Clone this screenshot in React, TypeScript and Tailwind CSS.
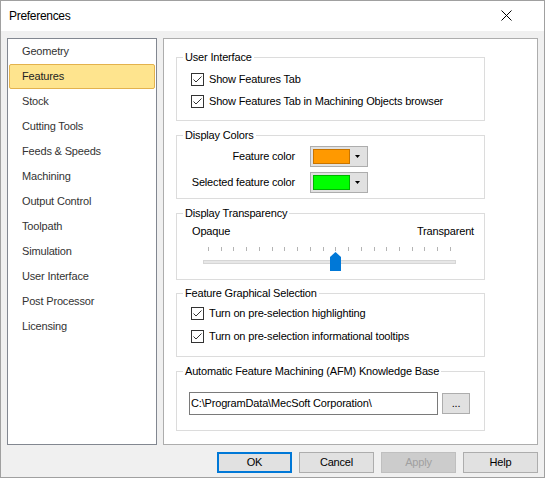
import React from 'react';

const FONT = "font-['Liberation_Sans',Arial,sans-serif]";

const NAV = [
  'Geometry',
  'Features',
  'Stock',
  'Cutting Tools',
  'Feeds & Speeds',
  'Machining',
  'Output Control',
  'Toolpath',
  'Simulation',
  'User Interface',
  'Post Processor',
  'Licensing',
];

const Check: React.FC<{ label: string; rowH: string }> = ({ label, rowH }) => (
  <div className={`flex items-center gap-[5px] ${rowH}`}>
    <svg width="13" height="13" viewBox="0 0 13 13" className="shrink-0">
      <rect x="0.5" y="0.5" width="12" height="12" fill="#fff" stroke="#333" />
      <polyline points="2.5,6.5 5,9 10.5,3.5" fill="none" stroke="#333" strokeWidth="1" />
    </svg>
    <span className="text-[#000]">{label}</span>
  </div>
);

const Group: React.FC<{ title: string; h: string; mt: string; children: React.ReactNode }> = ({
  title,
  h,
  mt,
  children,
}) => (
  <fieldset className={`w-[309px] ${h} ${mt} border border-[#dcdcdc] p-0 m-0`}>
    <legend className="ml-[6px] px-[2px] leading-[14px] text-[#000]">{title}</legend>
    {children}
  </fieldset>
);

const ColorButton: React.FC<{ fill: string; edge: string }> = ({ fill, edge }) => (
  <div className="w-[58px] h-[21px] ml-[15px] flex items-center pl-[2px] bg-[#e1e1e1] border border-[#adadad]">
    <div className={`w-[37px] h-[15px] border ${fill} ${edge}`} />
    <svg width="5" height="3" viewBox="0 0 5 3" className="ml-[5px]">
      <polygon points="0,0 5,0 2.5,3" fill="#000" />
    </svg>
  </div>
);

export default function App() {
  return (
    <div
      className={`w-[545px] h-[478px] border border-[#a0a0a0] bg-[#f0f0f0] flex flex-col text-[11px] tracking-[-0.17px] ${FONT}`}
    >
      {/* Title bar */}
      <div className="h-[30px] bg-white flex items-center pl-[8px]">
        <span className="text-[12px] tracking-[-0.3px] text-black">Preferences</span>
        <svg width="11" height="11" viewBox="0 0 11 11" className="ml-auto mr-[32px] mt-[-1px]">
          <path d="M0.5 0.5 L10.5 10.5 M10.5 0.5 L0.5 10.5" stroke="#000" strokeWidth="1" />
        </svg>
      </div>

      {/* Body */}
      <div className="flex gap-[6px] px-[6px] pt-[7px]">
        {/* Category list */}
        <div className="w-[150px] h-[407px] bg-white border border-[#828790]">
          {NAV.map((item) => (
            <div
              key={item}
              className={`mx-[1px] h-[25px] flex items-center pl-[12px] border rounded-[2px] ${
                item === 'Features'
                  ? 'bg-[#fee48e] border-[#e3b24d] text-[#222]'
                  : 'border-transparent text-[#333]'
              }`}
            >
              {item}
            </div>
          ))}
        </div>

        {/* Settings panel */}
        <div className="w-[375px] h-[407px] bg-white border border-[#adadad] pl-[12px] pt-[11px]">
          <Group title="User Interface" h="h-[71px]" mt="mt-0">
            <div className="pl-[14px] mt-[4px]">
              <Check label="Show Features Tab" rowH="h-[22px]" />
              <Check label="Show Features Tab in Machining Objects browser" rowH="h-[22px]" />
            </div>
          </Group>

          <Group title="Display Colors" h="h-[71px]" mt="mt-[7px]">
            <div className="mt-[4px] flex flex-col gap-[5px]">
              <div className="flex items-center">
                <span className="w-[118px] text-right text-black">Feature color</span>
                <ColorButton fill="bg-[#ff9900]" edge="border-[#c87400]" />
              </div>
              <div className="flex items-center">
                <span className="w-[118px] text-right text-black">Selected feature color</span>
                <ColorButton fill="bg-[#00ff00]" edge="border-[#00b400]" />
              </div>
            </div>
          </Group>

          <Group title="Display Transparency" h="h-[74px]" mt="mt-[7px]">
            <div className="mt-[4px] h-[14px] flex items-center justify-between pl-[15px] pr-[10px] text-black">
              <span>Opaque</span>
              <span>Transparent</span>
            </div>
            <div className="mt-[9px] ml-[31px] w-[243px] h-[4px] flex justify-between">
              {Array.from({ length: 20 }).map((_, i) => (
                <div key={i} className="w-[1px] h-[4px] bg-[#b4b4b4]" />
              ))}
            </div>
            <div className="relative mt-[1px] ml-[26px] w-[253px] h-[20px]">
              <div className="absolute left-0 right-0 top-[8px] h-[4px] bg-[#e7e7e7] border border-[#d6d6d6]" />
              <svg
                width="11"
                height="19"
                viewBox="0 0 11 19"
                className="absolute left-[127px] top-0"
              >
                <polygon points="0,5 5.5,0 11,5 11,19 0,19" fill="#0078d7" />
              </svg>
            </div>
          </Group>

          <Group title="Feature Graphical Selection" h="h-[71px]" mt="mt-[6px]">
            <div className="pl-[14px] mt-[2px]">
              <Check label="Turn on pre-selection highlighting" rowH="h-[23px]" />
              <Check label="Turn on pre-selection informational tooltips" rowH="h-[23px]" />
            </div>
          </Group>

          <Group title="Automatic Feature Machining (AFM) Knowledge Base" h="h-[67px]" mt="mt-[7px]">
            <div className="mt-[14px] pl-[12px] flex items-center gap-[4px]">
              <div className="w-[249px] h-[23px] border border-[#7a7a7a] bg-white flex items-center pl-[1px] text-black">
                C:\ProgramData\MecSoft Corporation\
              </div>
              <div className="w-[28px] h-[21px] bg-[#e1e1e1] border border-[#adadad] flex items-center justify-center text-black">
                ...
              </div>
            </div>
          </Group>
        </div>
      </div>

      {/* Dialog buttons */}
      <div className="flex justify-end gap-[7px] pr-[6px] mt-[7px]">
        <button className="w-[75px] h-[21px] bg-[#e1e1e1] border-2 border-[#0078d7] text-black">OK</button>
        <button className="w-[75px] h-[21px] bg-[#e1e1e1] border border-[#adadad] text-black">Cancel</button>
        <button className="w-[75px] h-[21px] bg-[#cccccc] border border-[#bfbfbf] text-[#a0a0a0]">Apply</button>
        <button className="w-[75px] h-[21px] bg-[#e1e1e1] border border-[#adadad] text-black">Help</button>
      </div>
    </div>
  );
}
